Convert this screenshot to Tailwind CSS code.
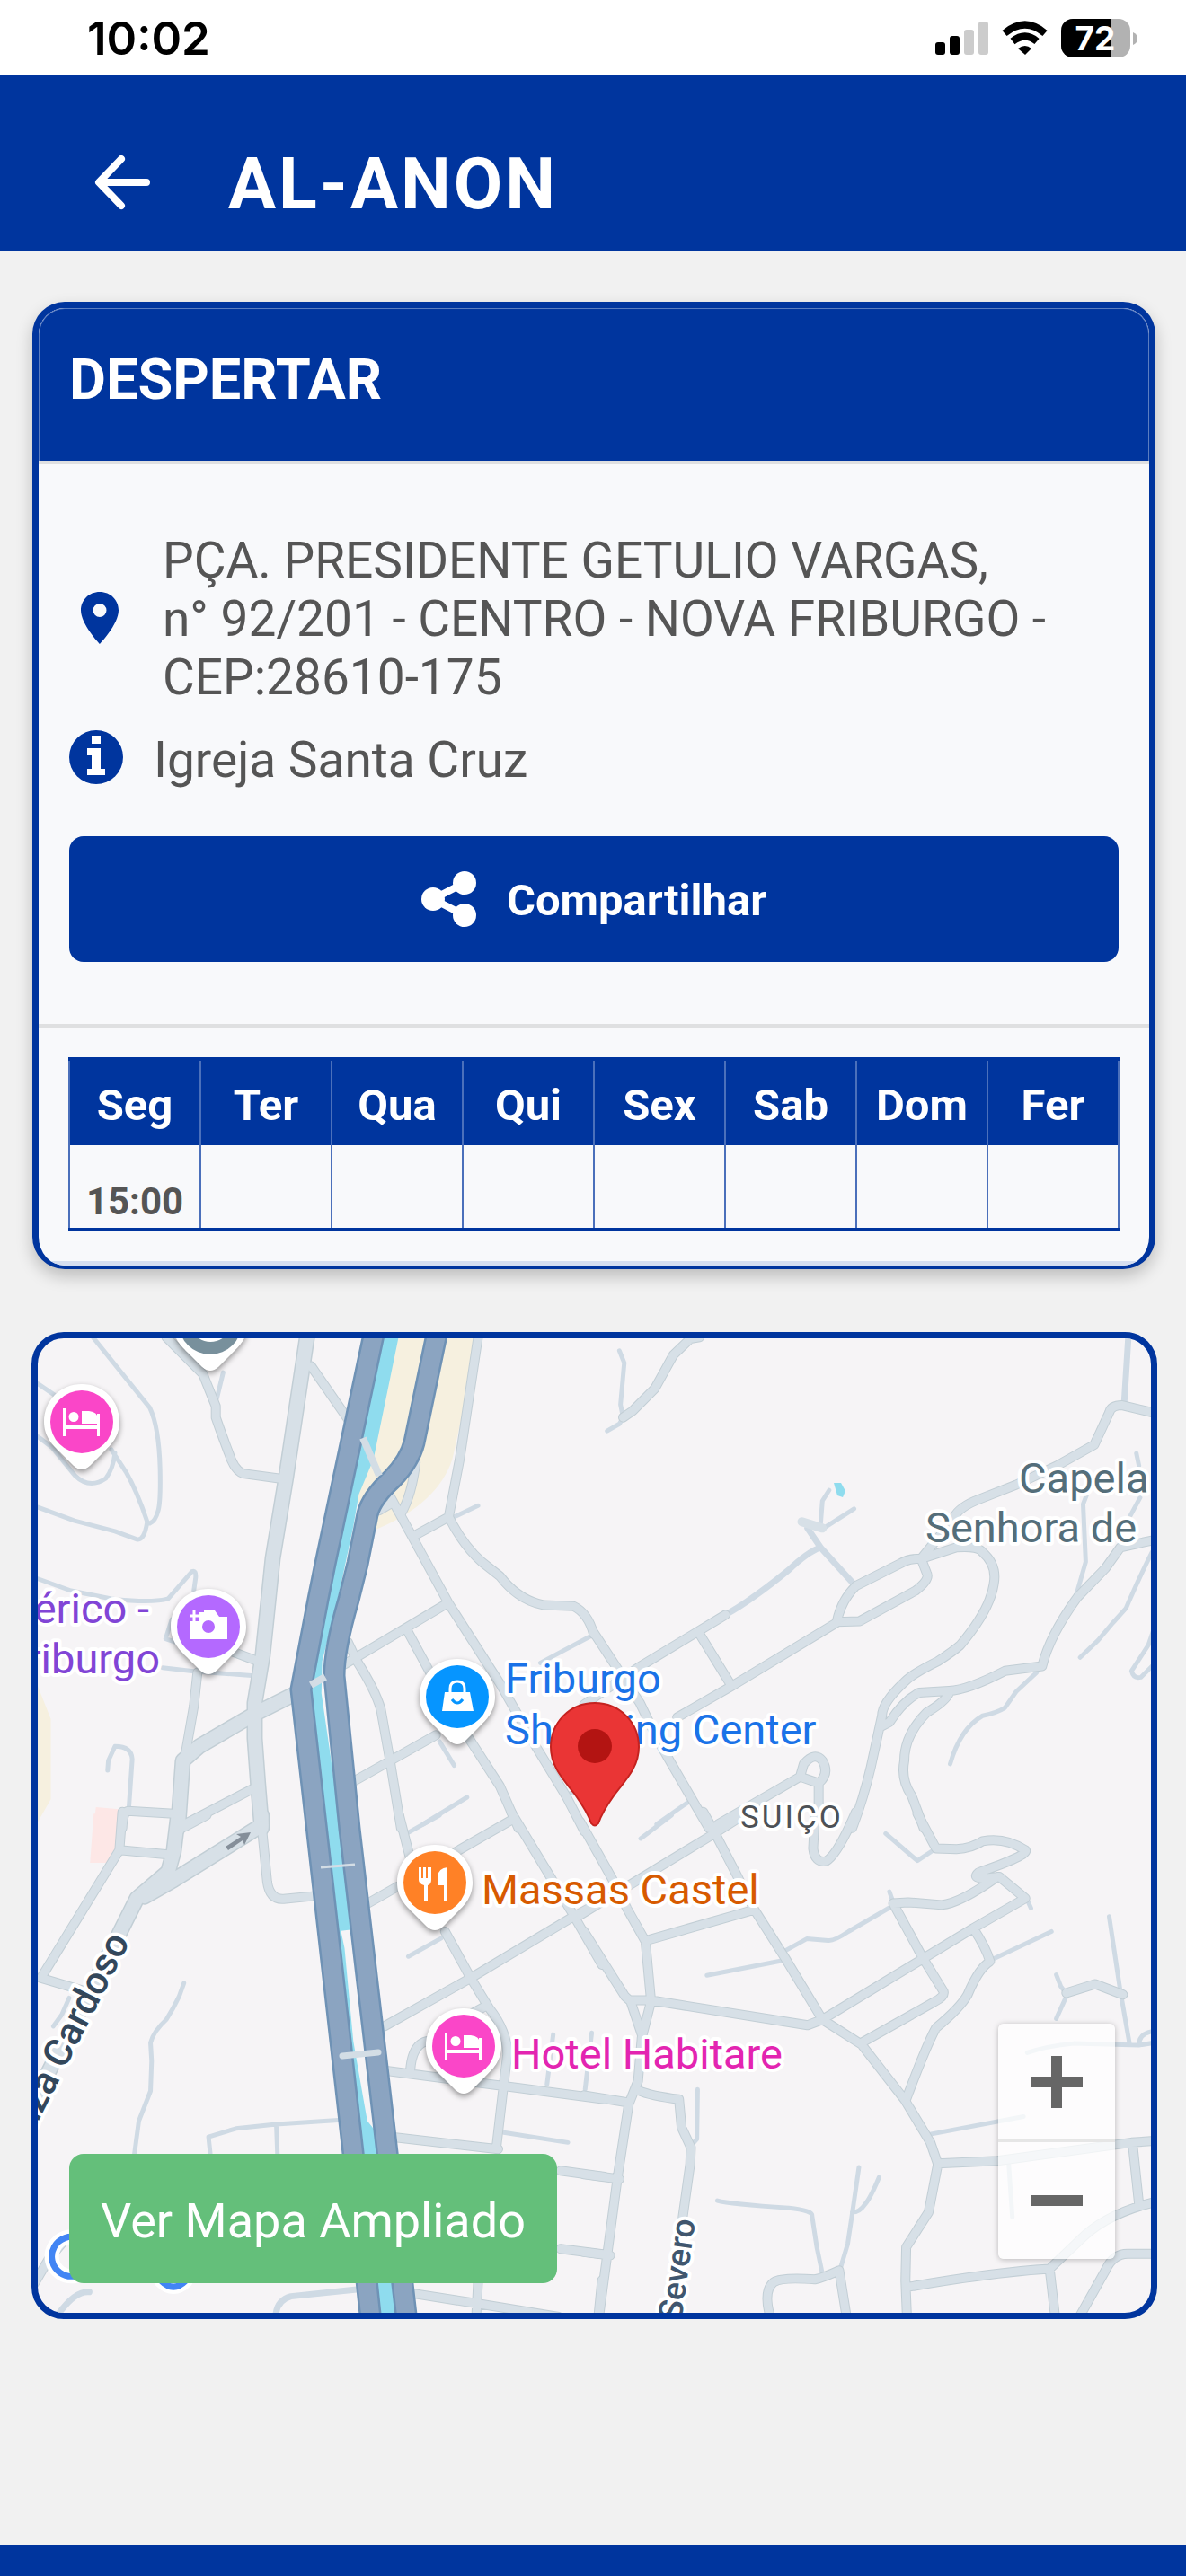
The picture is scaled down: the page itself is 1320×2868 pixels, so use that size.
<!DOCTYPE html>
<html lang="pt-BR">
<head>
<meta charset="utf-8">
<meta name="viewport" content="width=device-width, initial-scale=1">
<title>AL-ANON - Despertar</title>
<script src="https://cdn.jsdelivr.net/npm/@tailwindcss/browser@4"></script>
</head>
<body class="flex min-h-screen flex-col bg-[#f1f1f1] font-[Roboto,sans-serif] text-[#555]">

<!-- Status bar -->
<div class="flex h-[84px] items-center justify-between bg-white pt-[2px] pr-[54px] pl-[97px] text-black">
  <span class="font-[Inter,sans-serif] text-[51px] leading-[82px] font-semibold">10:02</span>
  <svg class="h-[82px] w-[226px]" viewBox="1040 2 226 82" role="img" aria-label="Sinal, Wi-Fi e bateria 72%">
    <rect x="1041" y="47" width="11" height="14" rx="3"/>
    <rect x="1057" y="40" width="11" height="21" rx="3"/>
    <rect x="1073" y="33" width="11" height="28" rx="3" fill="#ccc"/>
    <rect x="1089" y="24" width="11" height="37" rx="3" fill="#ccc"/>
    <g fill="none" stroke="#000" stroke-width="8">
      <path d="M1118 37Q1141 18 1163 37"/>
      <path d="M1127 46Q1141 35 1154 46"/>
    </g>
    <path d="M1133 54Q1141 48 1148 54L1141 61Z"/>
    <clipPath id="cell"><rect x="1181" y="21" width="77" height="43" rx="13"/></clipPath>
    <g clip-path="url(#cell)"><path d="M1181 21h77v43h-77z" fill="#b2b2b2"/><path d="M1181 21h56v43h-56z"/></g>
    <path d="M1261 36q5 2 5 7t-5 7z" fill="#b2b2b2"/>
    <text x="1219" y="56" text-anchor="middle" fill="#fff" class="font-[Inter,sans-serif] text-[37px] font-bold">72</text>
  </svg>
</div>

<header class="flex items-center gap-[87px] bg-[#00359e] px-[105px] pt-[72px] pb-[28px] text-white">
  <button type="button" aria-label="Voltar" class="shrink-0">
    <svg class="h-[62px] w-[62px]" viewBox="0 0 62 62" fill="none" stroke="currentColor" stroke-width="8" stroke-linecap="round" stroke-linejoin="round"><path d="M30 4L5 30L30 56M6 30H58"/></svg>
  </button>
  <h1 class="pt-[2px] text-[79px] leading-[94px] font-bold tracking-[3px]">AL-ANON</h1>
</header>

<main class="grow pt-[56px] pb-[240px]">
  <section class="mr-[34px] ml-[36px] overflow-hidden rounded-[36px] border-[7px] border-b-4 border-[#00359e] bg-[#f8f9fb] shadow-[0_8px_18px_rgba(0,0,0,0.22)]">
    <div class="rounded-t-[29px] border border-b-0 border-[#5b7dc0] bg-[#00359e] px-[33px] pt-[43px] pb-[54px]">
      <h2 class="text-[63px] leading-[72px] font-bold text-white">DESPERTAR</h2>
    </div>
    <div class="border-y-[4px] border-[#dfe0e1] px-[34px] pt-[75px] pb-[69px]">
      <div class="flex items-center pl-[13px]">
        <svg class="mr-[49px] mb-[4px] h-[58px] w-[42px] shrink-0" viewBox="0 0 42 58" fill="#00359e" aria-hidden="true"><path fill-rule="evenodd" d="M21 0C9 0 0 9 0 20.500C0 36 21 58 21 58S42 36 42 20.500C42 9 33 0 21 0ZM21 13a7.500 7.500 0 1 1 0 15a7.500 7.500 0 1 1 0-15Z"/></svg>
        <p class="text-[55px] leading-[65px]">PÇA. PRESIDENTE GETULIO VARGAS,<br>n° 92/201 - CENTRO - NOVA FRIBURGO -<br>CEP:28610-175</p>
      </div>
      <div class="mt-[26px] flex items-center gap-[34px]">
        <svg class="mb-[6px] h-[60px] w-[60px] shrink-0" viewBox="0 0 60 60" aria-hidden="true"><circle cx="30" cy="30" r="30" fill="#00359e"/><path fill="#fff" d="M25 6h10v9H25zM20 20h15v23h5v7H20v-7h5V28h-5z"/></svg>
        <p class="text-[55px] leading-[65px]">Igreja Santa Cruz</p>
      </div>
      <button type="button" class="mt-[52px] flex h-[140px] w-full items-center justify-center gap-[33px] rounded-[16px] bg-[#00359e] text-[49px] font-bold text-white">
        <svg class="h-[62px] w-[62px]" viewBox="0 0 62 62" aria-hidden="true"><g fill="currentColor"><circle cx="13" cy="31" r="13"/><circle cx="48" cy="13" r="13"/><circle cx="48" cy="49" r="13"/></g><path d="M48 13L13 31L48 49" fill="none" stroke="currentColor" stroke-width="8"/></svg>
        <span class="pt-[4px]">Compartilhar</span>
      </button>
    </div>
    <div class="border-b-[5px] border-[#d5def0] px-[33px] py-[33px]">
      <table class="w-full table-fixed border-collapse border-y-[4px] border-[#00359e] text-center">
        <thead>
          <tr class="h-[96px] bg-[#00359e] text-[49px] leading-[56px] font-bold text-white">
            <th scope="col" class="border-x-2 border-[#4b70bb] pt-[6px]">Seg</th><th scope="col" class="border-x-2 border-[#4b70bb] pt-[6px]">Ter</th><th scope="col" class="border-x-2 border-[#4b70bb] pt-[6px]">Qua</th><th scope="col" class="border-x-2 border-[#4b70bb] pt-[6px]">Qui</th><th scope="col" class="border-x-2 border-[#4b70bb] pt-[6px]">Sex</th><th scope="col" class="border-x-2 border-[#4b70bb] pt-[6px]">Sab</th><th scope="col" class="border-x-2 border-[#4b70bb] pt-[6px]">Dom</th><th scope="col" class="border-x-2 border-[#4b70bb] pt-[6px]">Fer</th>
          </tr>
        </thead>
        <tbody>
          <tr class="h-[94px] text-[42px] leading-[48px] font-bold">
            <td class="border-x-2 border-[#4b70bb] pt-[34px]">15:00</td><td class="border-x-2 border-[#4b70bb]"></td><td class="border-x-2 border-[#4b70bb]"></td><td class="border-x-2 border-[#4b70bb]"></td><td class="border-x-2 border-[#4b70bb]"></td><td class="border-x-2 border-[#4b70bb]"></td><td class="border-x-2 border-[#4b70bb]"></td><td class="border-x-2 border-[#4b70bb]"></td>
          </tr>
        </tbody>
      </table>
    </div>
  </section>

  <section aria-label="Mapa" class="relative mt-[70px] mr-[32px] ml-[35px] overflow-hidden rounded-[36px] border-[7px] border-[#00359e] bg-[#f6f4f6]">
    <svg class="block h-auto w-full" viewBox="42 1489 1239 1085">
      <defs>
        <!-- Four tiles: north-west, north-east, south-west, south-east -->
        <g id="wide">
          <g transform="translate(30 1470) scale(.408163 .357143)">
            <path class="[vector-effect:non-scaling-stroke]" d="M765 40L706 490L670 740L643 1040L621 1190L621 1300L630 1440L640 1580M725 1165L620 1225L470 1325L425 1370L420 1450L412 1580"/>
          </g>
          <g transform="translate(30 2020) scale(.408163 .369898)">
            <path class="[vector-effect:non-scaling-stroke]" d="M412 0L400 110L385 170L300 250L250 360L60 770L20 870M640 0V30L400 195L320 245"/>
          </g>
        </g>
        <g id="streets">
          <g transform="translate(30 1470) scale(.408163 .357143)">
            <path class="[vector-effect:non-scaling-stroke]" d="M465 1095L455 1200L432 1350M620 1455L430 1568M400 1535L275 1527Q262 1530 260 1580M380 50L480 165L515 265V300Q530 350 550 410Q565 465 590 475L700 492M560 1030L630 1060M775 140L878 310M1230 50L1180 430L1150 610L1062 665M1150 610Q1190 700 1240 750L1290 795Q1340 870 1410 885L1490 888Q1530 910 1545 975M985 535L1050 670L1150 880L1290 1130L1390 1330L1470 1480L1520 1590M1145 880L1035 955L865 1070M1035 960L1130 1160M875 1000L900 1060Q950 1150 965 1210L990 1370L1020 1580M1115 1290L890 1435M1205 1300L1290 1450L1340 1580M1060 440Q1050 540 1020 600M960 590L990 570"/>
          </g>
          <g transform="translate(650 1470) scale(.414541 .357143)">
            <path class="[vector-effect:non-scaling-stroke]" d="M26 970L150 1190L200 1310L290 1490L335 1580M310 50L285 55L240 105L190 210L130 280L105 300M1535 287L1445 262Q1415 262 1410 285L1370 385L1270 450L1160 510L1050 560Q1000 585 990 620L905 740Q870 740 850 755L730 825Q690 870 678 940L400 1135L250 1235M678 937L740 935L890 840Q930 805 920 785L905 740M920 735L1000 705Q1060 700 1070 720Q1110 760 1100 820Q1090 900 1010 1010Q990 1030 950 1060Q880 1100 860 1125Q800 1190 800 1230L770 1390Q750 1490 720 1580M630 1540V1440L580 1420L360 1568M580 1420L590 1380Q620 1340 640 1370Q660 1410 630 1440M795 1265L820 1250Q860 1180 900 1158L980 1152Q1030 1150 1130 1090L1230 1075Q1250 980 1325 860L1400 770L1440 705L1530 682M980 1160Q970 1185 920 1220Q860 1290 860 1370Q850 1430 880 1480L912 1580M0 1195L145 1080L380 915M310 975L395 1135"/>
          </g>
          <g transform="translate(30 2020) scale(.408163 .369898)">
            <path class="[vector-effect:non-scaling-stroke]" d="M260 -10L252 105L38 490L160 530M252 105L385 118M490 0L430 35M640 30L655 200Q662 255 700 252L785 243M1015 0L1045 130M1320 -10L1490 300L1568 450M1320 15L1170 110M1010 215L930 265M1140 350L1210 490L1260 580Q1310 650 1310 720L1300 810L1280 1000M975 635L1210 490L1490 305L1575 255M1045 770Q1050 690 1090 680M985 770L1300 815L1575 855M1005 970L1285 1005M1455 1070L1575 1088M1455 1305L1575 1322M1055 1440L1230 1470L1450 1510M1230 1405L1225 1510M1568 1400L1558 1510M1250 575L1200 605M20 1410L60 1335L110 1270"/>
          </g>
          <g transform="translate(650 2020) scale(.414541 .369898)">
            <path class="[vector-effect:non-scaling-stroke]" d="M320 -10L350 50L410 180L455 280L540 430L640 615L745 690L860 855L930 985L950 1050L925 1195L865 1300L863 1400L867 1510M-10 20L75 190L115 280L165 380L180 560L155 670L145 800L120 870L90 1090L40 1510M0 350L110 545L125 560L155 660M125 557H180L600 632L640 615M-10 300L130 205L350 55L420 5M730 -10Q680 120 650 138Q620 145 615 100L620 0M895 -5L945 100L1000 102Q1040 100 1070 78Q1130 65 1185 105Q1195 120 1060 172Q1040 190 1075 190L1115 185L1185 250L1045 340L640 615M1110 185Q1010 265 960 270L870 262L830 265L910 430L965 530Q970 545 940 562L745 685M1045 340Q1080 400 1090 440Q1060 460 1030 540Q1010 580 945 640Q920 690 865 855M1295 535L1372 508L1447 540M165 378L455 285M145 828Q180 845 255 855L262 940L287 1000L285 1050L265 1210M0 843L120 865M0 1081L95 1095M0 1315L70 1325M950 1048L1110 1040L1470 985L1530 980M1473 990L1490 1170M870 1420Q1100 1375 1250 1365L1330 1280Q1400 1200 1530 1165M1250 1365L1265 1510M1330 1510L1400 1370Q1420 1320 1460 1320H1530M500 1510Q480 1430 510 1405Q530 1390 620 1397Q640 1393 685 1370L705 1510"/>
          </g>
        </g>
        <path id="highway" d="M417 1480L362 1740L354 1780L335 1880L353 2040L393 2396L413 2585M487 1480L461 1605Q456 1625 437 1645Q413 1667 409 1685L398 1740L388 1780Q372 1835 372 1865L389 2035L431 2396L453 2585"/>
        <path id="pin" d="M0-42C24-42 42-24 42 0C42 17 32 26 24 34L9 49Q0 57-9 49L-24 34C-32 26-42 17-42 0C-42-24-24-42 0-42Z"/>
        <path id="bed" fill="#fff" d="M-21-15h3v19h35v-13h3v25h-3v-8h-35v8h-3zM-9-11a5.500 5.500 0 1 1 0 11a5.500 5.500 0 1 1 0-11zM0-12h8q10 1 10 9v5H0z"/>
      </defs>

      <!-- Areas and water -->
      <g transform="translate(30 1470) scale(.408163 .357143)">
        <path fill="#f6f0df" d="M1000 40L1235 40L1160 430Q1120 570 950 650L890 540L945 430ZM20 1110L65 1240V1490L20 1580Z"/>
        <path fill="#fde7e6" d="M188 1515L258 1522V1570H182Z"/>
        <path fill="#8fdcee" d="M960 40H1015L945 430L905 540L890 640L845 880L805 1060L803 1160L855 1570H800L770 1160L780 1000L870 540Z"/>
      </g>
      <g transform="translate(30 2020) scale(.408163 .369898)">
        <path fill="#fde7e6" d="M182 -5H258L245 110L220 143H172Z"/>
        <path fill="#8fdcee" d="M805 -5H855L882 345L856 348L866 400L890 680L912 820L928 920L950 950L1010 1510H955L900 900L840 300Z"/>
      </g>
      <path fill="#8fdcee" d="M928 1650H936L941 1659L938 1666L932 1664Z"/>

      <!-- Lanes -->
      <g fill="none" stroke="#cfdae4" stroke-width="5" stroke-linecap="round" stroke-linejoin="round">
        <g transform="translate(30 1470) scale(.408163 .357143)">
          <path class="[vector-effect:non-scaling-stroke]" d="M180 50L335 270Q360 330 363 460Q365 560 358 590Q350 625 335 630M328 625Q320 685 300 680L240 655L130 622L30 580M230 400L270 470Q300 530 328 625M30 360L70 395L130 480Q170 525 215 490Q235 460 240 410M30 195L75 230M535 160L518 240M30 803L120 840L230 865Q340 880 385 865L450 780Q462 775 460 800L455 840M395 930L378 990L430 1010M370 1080L460 1092L620 1105M220 1400L222 1370L240 1325Q285 1325 287 1365L278 1515M1125 1310L1165 1385M1540 980L1400 1065M1200 1484L1080 1568M1165 610L1230 575M1470 1480L1500 1460"/>
        </g>
        <g transform="translate(650 1470) scale(.414541 .357143)">
          <path class="[vector-effect:non-scaling-stroke]" d="M105 300L95 320L62 342M105 300L98 260L108 130L95 92M1483 412L1490 450M1493 550L1465 610M1350 540L1340 570L1347 750L1320 860M1525 720Q1490 800 1455 895L1420 940L1380 995L1332 1048M1530 960L1515 1010L1470 1090Q1475 1115 1495 1110L1530 1070M1215 1095L1160 1155L1130 1205Q1110 1220 1070 1230Q1010 1270 983 1380M285 1495L195 1568M635 635L640 560L658 527M650 640L725 585"/>
          <path stroke-width="7" class="[vector-effect:non-scaling-stroke]" d="M1462 40L1450 260M380 915Q450 870 550 775Q600 720 635 705L725 820M635 705L600 645"/>
          <path stroke-width="10" stroke="#d7e0e7" class="[vector-effect:non-scaling-stroke]" d="M585 625L640 645"/>
        </g>
        <g transform="translate(30 2020) scale(.408163 .369898)">
          <path class="[vector-effect:non-scaling-stroke]" d="M428 505L415 545Q400 580 380 615Q345 650 337 685L340 740L337 830L305 920L293 1020M500 1020L495 968L570 943L680 930L858 917M680 930L683 1020M1125 0L1035 55M1435 660L1418 810M1540 655L1522 825M1040 425L1130 370M1300 955L1475 985M115 550L95 600L72 635"/>
          <path stroke-width="7" class="[vector-effect:non-scaling-stroke]" d="M905 1427L720 1448Q680 1460 678 1510M80 1510Q130 1430 170 1435"/>
        </g>
        <g transform="translate(650 2020) scale(.414541 .369898)">
          <path class="[vector-effect:non-scaling-stroke]" d="M235 0L152 70M820 230L830 262M825 275L710 350Q670 380 655 377L598 372L540 408M530 438L330 482M1100 432L1255 350M1190 255L1200 280M1410 305L1440 530L1465 690M1268 480L1280 515L1297 540L1268 612M1190 715Q1240 695 1315 687L1490 692L1530 685M1490 692Q1490 655 1530 650M810 55L895 137L945 100M305 825L303 975L295 985M930 960L1180 907M1140 1045L1150 1210M358 1160Q390 1170 550 1182Q615 1190 612 1205L625 1300L640 1380M738 1060L720 1200L708 1290L688 1365M792 1090Q770 1150 755 1170Q740 1195 720 1195"/>
        </g>
      </g>

      <!-- Streets: edge first, then surface -->
      <g fill="none" stroke-linecap="round" stroke-linejoin="round">
        <use href="#wide" stroke="#c2ced5" stroke-width="18"/>
        <use href="#streets" stroke="#c2ced5" stroke-width="11"/>
        <use href="#wide" stroke="#d7e0e7" stroke-width="15"/>
        <use href="#streets" stroke="#d7e0e7" stroke-width="9"/>
      </g>
      <g fill="none" stroke-linejoin="round">
        <use href="#highway" stroke="#6f92b5" stroke-width="25"/>
        <use href="#highway" stroke="#8ba4c1" stroke-width="20"/>
      </g>
      <!-- Bridges -->
      <g fill="none" stroke="#d3dde5">
        <path d="M404 1600L422 1642M346 1875L362 1866" stroke-width="8"/>
        <path d="M357 2078L395 2075" stroke-width="3"/>
        <path d="M381 2288L421 2284" stroke-width="7" stroke-linecap="round"/>
      </g>
      <path fill="#858f9a" d="M251 2055L268 2044L263 2041L279 2039L272 2053L270 2048L254 2059Z"/>

      <!-- Street names -->
      <g class="font-medium [paint-order:stroke]" stroke="#fff" stroke-width="8" stroke-linejoin="round" text-anchor="end">
        <text transform="translate(145 2160) rotate(-63)" fill="#33475b" class="text-[43px]">uza Cardoso</text>
        <text transform="translate(774 2471) rotate(-82)" fill="#40566e" class="text-[37px]">Severo</text>
      </g>

      <!-- Place names -->
      <g class="text-[47px] [paint-order:stroke]" stroke="#fff" stroke-width="8" stroke-linejoin="round">
        <text x="166" y="1806" text-anchor="end" fill="#8145d6">érico -</text>
        <text x="178" y="1862" text-anchor="end" fill="#8145d6">riburgo</text>
        <text x="562" y="1884" fill="#1a73e8">Friburgo</text>
        <text x="562" y="1941" fill="#1a73e8">Shopping Center</text>
        <text x="536" y="2119" fill="#d75a00">Massas Castel</text>
        <text x="569" y="2302" fill="#e325b1">Hotel Habitare</text>
        <text x="1134" y="1661" fill="#546e7a">Capela</text>
        <text x="1030" y="1716" fill="#546e7a">Senhora de</text>
        <text x="824" y="2034" fill="#4d5156" class="text-[35px] tracking-[3px]">SUIÇO</text>
      </g>

      <!-- Place pins -->
      <g class="drop-shadow-[0_3px_3px_rgba(0,0,0,0.4)]" fill="#fff">
        <use href="#pin" x="234" y="1472"/><use href="#pin" x="91" y="1582"/><use href="#pin" x="232" y="1810"/>
        <use href="#pin" x="509" y="1888"/><use href="#pin" x="484" y="2095"/><use href="#pin" x="516" y="2277"/>
      </g>
      <circle cx="234" cy="1472" r="35" fill="#78909c"/>
      <path d="M222 1487Q234 1495 247 1487" fill="none" stroke="#fff" stroke-width="4"/>
      <circle cx="91" cy="1582" r="35" fill="#fa46c8"/>
      <use href="#bed" x="91" y="1582"/>
      <circle cx="516" cy="2277" r="35" fill="#fa46c8"/>
      <use href="#bed" x="516" y="2277"/>
      <circle cx="232" cy="1810" r="35" fill="#b469ff"/>
      <path fill="#fff" fill-rule="evenodd" d="M211 1804h11v-10h5v-2h12l5 7h9v25h-42zM232 1803a7 7 0 1 0 0 14a7 7 0 1 0 0-14z"/>
      <path d="M211 1798h11M216 1792v12" stroke="#fff" stroke-width="3"/>
      <circle cx="509" cy="1888" r="35" fill="#0695ff"/>
      <path fill="#fff" d="M495 1883h28l4 21h-35z"/>
      <path fill="none" stroke="#fff" stroke-width="3" d="M501 1883v-4q0-8 8-8t8 8v4"/>
      <path fill="none" stroke="#0695ff" stroke-width="3" d="M503 1891q6 8 12 0"/>
      <circle cx="484" cy="2095" r="35" fill="#ff8126"/>
      <path fill="#fff" d="M466 2078h3v12h2v-12h3v12h2v-12h4v14q0 5-4 6v18h-4v-18q-6-2-6-6zM498 2078v38h-4v-18h-7v-10q1-9 11-10z"/>

      <!-- Selected location -->
      <path fill="#ea3535" stroke="#c5221f" stroke-width="2" d="M662 1895C634 1895 613 1917 613 1944C613 1968 630 1983 640 1997C650 2011 655 2020 658 2029Q662 2034 666 2029C669 2020 674 2011 684 1997C694 1983 711 1968 711 1944C711 1917 690 1895 662 1895Z"/>
      <circle cx="662" cy="1943" r="19" fill="#b31412"/>

      <!-- Map provider mark -->
      <g fill="none" stroke-linecap="round">
        <path d="M88 2491A22 22 0 1 0 96 2526M179 2538Q193 2552 207 2538" stroke="#fff" stroke-width="16"/>
        <path d="M88 2491A22 22 0 1 0 96 2526M179 2538Q193 2552 207 2538" stroke="#4285f4" stroke-width="7"/>
      </g>
    </svg>

    <a href="#mapa" class="absolute bottom-[33px] left-[35px] flex h-[144px] items-center rounded-[16px] bg-[#64bf7a] px-[35px] pt-[4px] text-[54px] whitespace-nowrap text-white">Ver Mapa Ampliado</a>

    <div class="absolute right-[40px] bottom-[60px] flex w-[130px] flex-col divide-y-[3px] divide-[#e6e6e6] rounded-[6px] bg-white/75 shadow-[0_1px_6px_rgba(0,0,0,0.25)]">
      <button type="button" aria-label="Aumentar zoom" class="flex h-[132px] items-center justify-center"><svg class="h-[58px] w-[58px]" viewBox="0 0 58 58" fill="none" stroke="#666" stroke-width="12"><path d="M0 29H58M29 0V58"/></svg></button>
      <button type="button" aria-label="Diminuir zoom" class="flex h-[130px] items-center justify-center"><svg class="h-[58px] w-[58px]" viewBox="0 0 58 58" fill="none" stroke="#666" stroke-width="12"><path d="M0 29H58"/></svg></button>
    </div>
  </section>
</main>

<footer class="h-[35px] bg-[#00359e]"></footer>
</body>
</html>
